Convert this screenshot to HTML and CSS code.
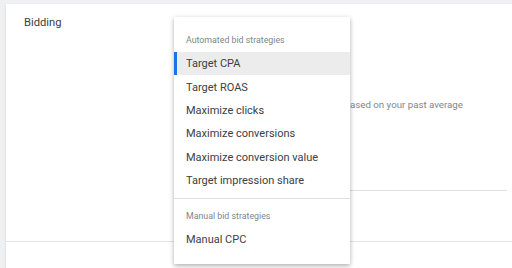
FILE: index.html
```html
<!DOCTYPE html>
<html>
<head>
<meta charset="utf-8">
<link rel="stylesheet" href="styles.css">
</head>
<body>
<div class="card">
  <div class="section">
    <div class="label">Bidding</div>
    <div class="detail">
      <div class="desc">This is based on your past average</div>
      <div class="rule"></div>
    </div>
  </div>
  <div class="section-next"></div>

  <div class="menu">
    <div class="group-title first">Automated bid strategies</div>
    <div class="item selected">Target CPA</div>
    <div class="item">Target ROAS</div>
    <div class="item">Maximize clicks</div>
    <div class="item">Maximize conversions</div>
    <div class="item">Maximize conversion value</div>
    <div class="item">Target impression share</div>
    <div class="divider"></div>
    <div class="group-title second">Manual bid strategies</div>
    <div class="item">Manual CPC</div>
  </div>
</div>
</body>
</html>
```
FILE: styles.css
```css
html, body {
  margin: 0;
  padding: 0;
}
body {
  background: #eff0f2;
  font-family: Roboto, "Noto Sans", Arial, sans-serif;
  width: 512px;
  height: 268px;
  overflow: hidden;
  padding: 4px 0 0 6px;
  box-sizing: border-box;
}
.card {
  position: relative;
  background: #fff;
  height: 264px;
  box-shadow: 0 1px 2px rgba(60,64,67,.2);
}
.section {
  display: grid;
  grid-template-columns: 308px 1fr;
  height: 237px;
  border-bottom: 1px solid #e3e4e6;
}
.label {
  padding: 12px 0 0 18px;
  font-size: 11.2px;
  line-height: 14px;
  color: #3c4043;
}
.detail {
  padding: 0 5px 0 0;
  display: flex;
  flex-direction: column;
}
.desc {
  margin-top: 95px;
  font-size: 9.7px;
  line-height: 12px;
  color: #80868b;
  white-space: nowrap;
}
.rule {
  margin-top: 79px;
  border-top: 1px solid #e0e0e0;
}
.menu {
  position: absolute;
  left: 168px;
  top: 13px;
  width: 176px;
  background: #fff;
  box-shadow: 0 2px 4px rgba(0,0,0,.22), 0 1px 6px rgba(0,0,0,.12);
  padding: 8px 0 13px;
}
.group-title {
  padding-left: 12px;
  font-size: 8.8px;
  line-height: 12px;
  color: #80868b;
  display: flex;
  align-items: center;
}
.group-title.first {
  padding-top: 3px;
  height: 24px;
}
.group-title.second {
  padding-top: 6px;
  height: 22px;
}
.item {
  height: 23.4px;
  display: flex;
  align-items: center;
  padding-left: 12px;
  font-size: 11px;
  color: #3c4043;
  box-sizing: border-box;
}
.item.selected {
  background: #ececec;
  border-left: 3px solid #1a73e8;
  padding-left: 9px;
}
.divider {
  margin-top: 6px;
  border-top: 1px solid #e0e0e0;
}
```
